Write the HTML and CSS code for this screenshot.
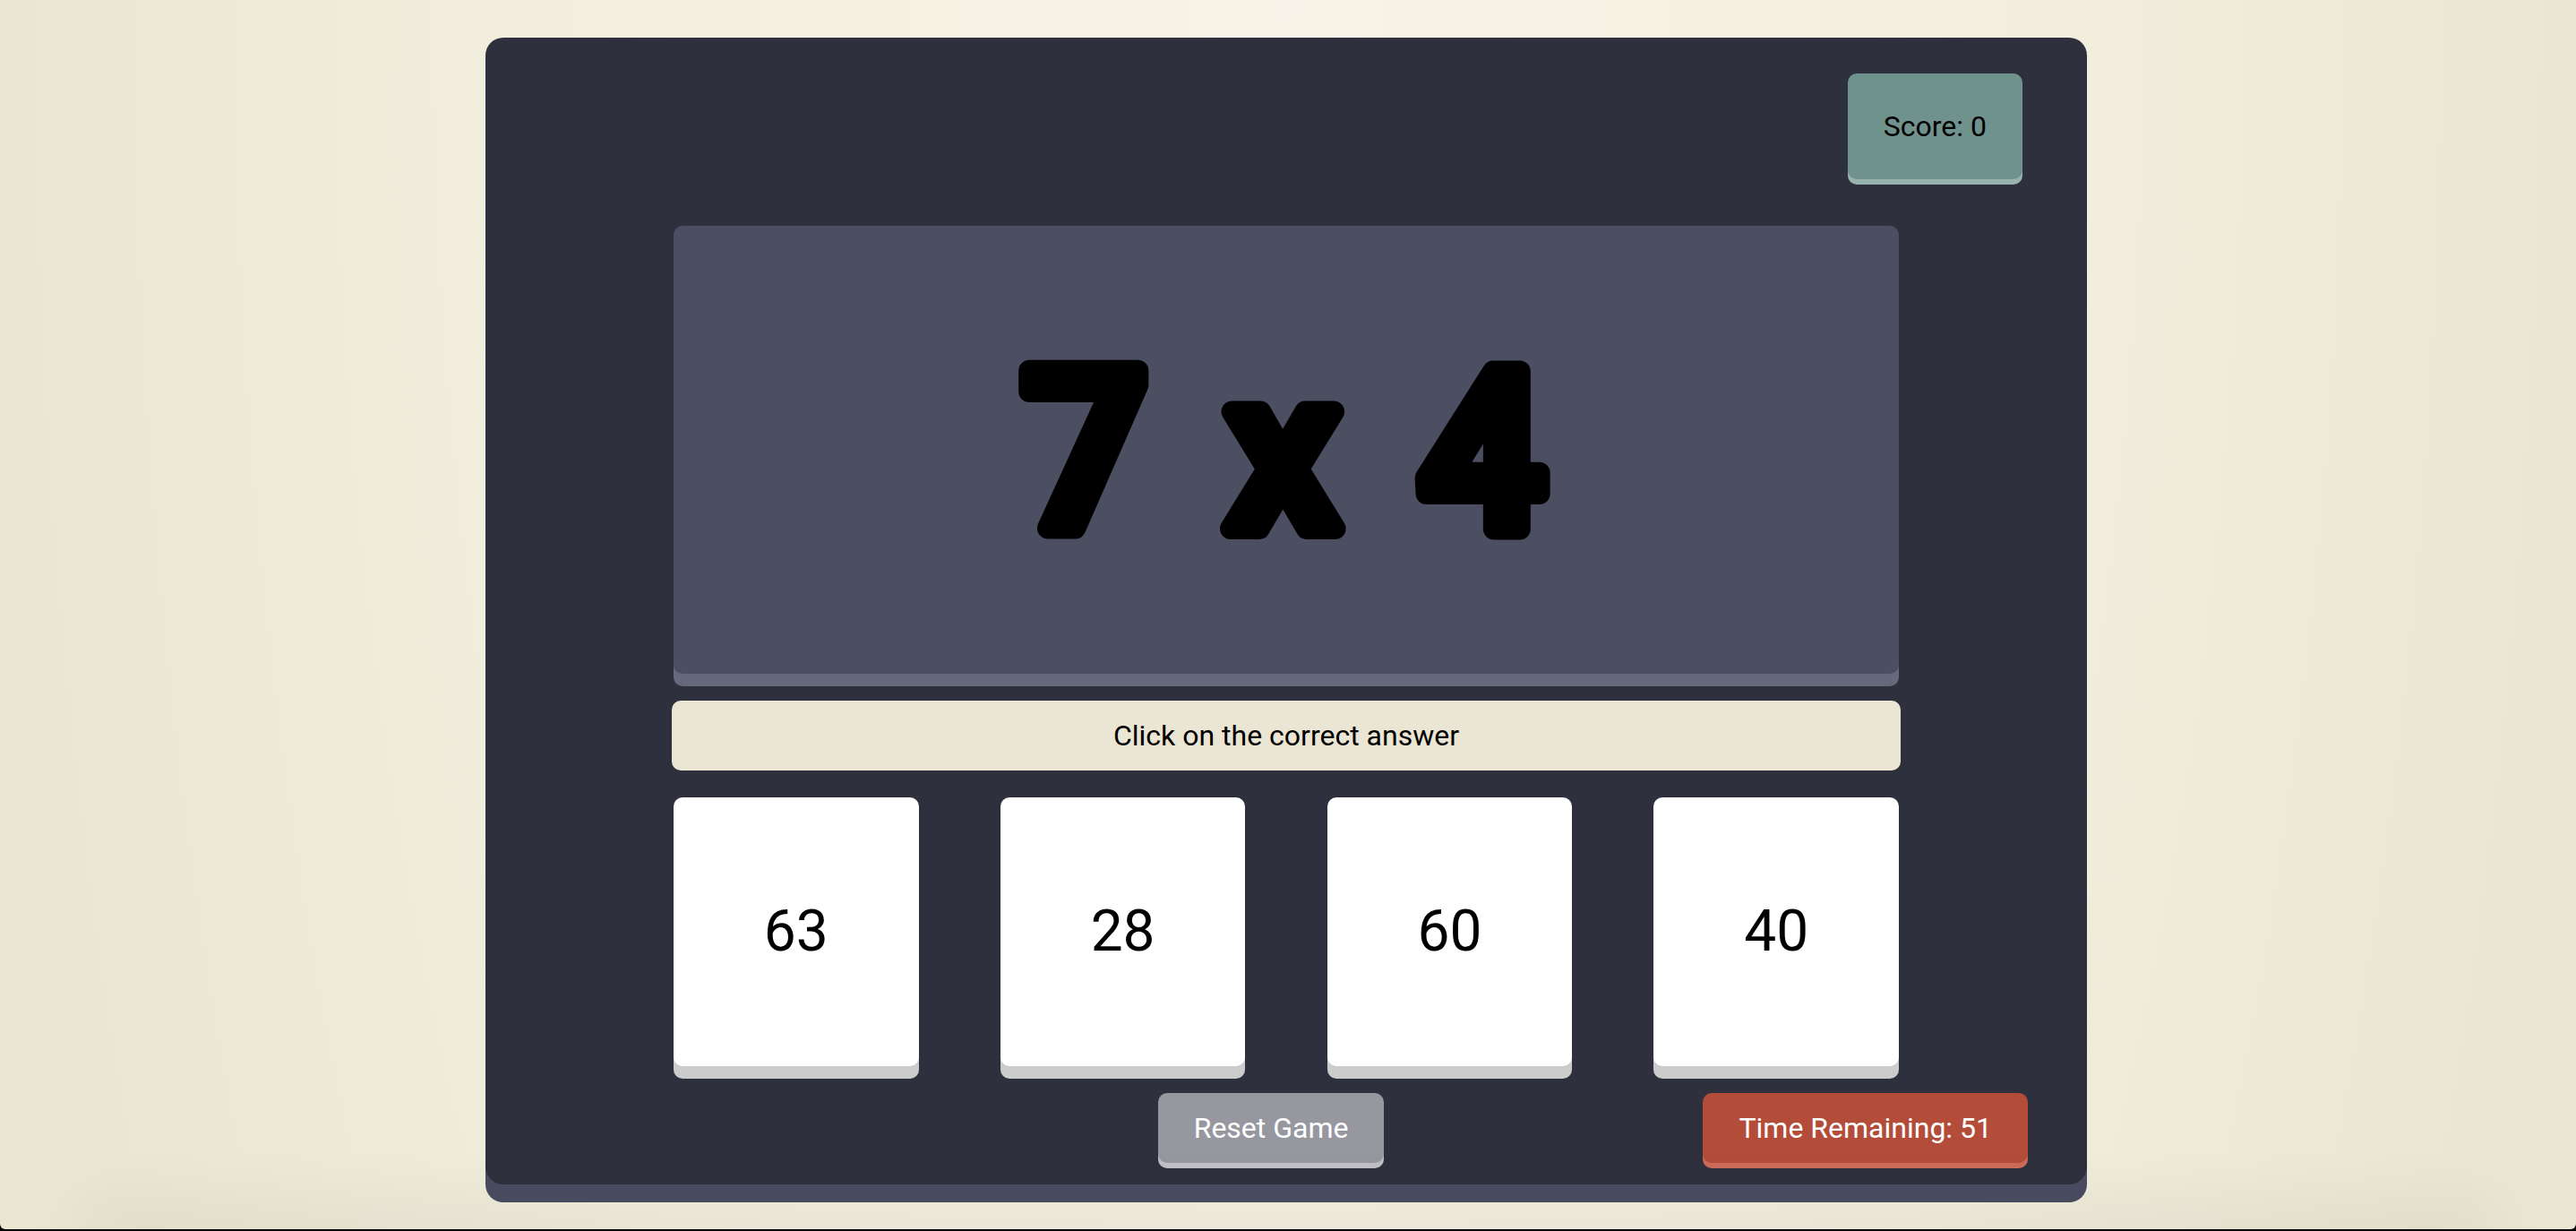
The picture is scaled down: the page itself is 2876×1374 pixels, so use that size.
FILE: index.html
```html
<!DOCTYPE html>
<html lang="en">
<head>
<meta charset="utf-8">
<meta name="viewport" content="width=device-width, initial-scale=1">
<title>Multiplication Game</title>
<link rel="stylesheet" href="styles.css">
</head>
<body>
<main class="page">
  <section class="game">
    <header class="top-bar">
      <p class="score">Score: <span>0</span></p>
    </header>
    <div class="board">
      <h1 class="question">
        <svg class="sum" viewBox="0 0 640 400">
          <text x="95 316 539" y="288">7x4</text>
        </svg>
      </h1>
      <p class="instruction">Click on the correct answer</p>
      <div class="answers">
        <button class="answer" type="button">63</button>
        <button class="answer" type="button">28</button>
        <button class="answer" type="button">60</button>
        <button class="answer" type="button">40</button>
      </div>
    </div>
    <footer class="controls">
      <button class="reset" type="button">Reset Game</button>
      <p class="timer">Time Remaining: <span>51</span></p>
    </footer>
  </section>
</main>
<div class="floor"></div>
</body>
</html>
```
FILE: styles.css
```css
* {
  box-sizing: border-box;
}

html {
  min-height: 100%;
  background: #000;
}

body {
  margin: 0;
  font-family: Roboto, "Liberation Sans", sans-serif;
  font-size: 32px;
  line-height: 38px;
  color: #000;
}

h1,
p {
  margin: 0;
  font-weight: 400;
}

button {
  border: 0;
  font: inherit;
  color: inherit;
  cursor: pointer;
}

.page {
  min-height: calc(100vh - 2px);
  padding: 42px 24px 30px 20px;
  border-radius: 0 0 6px 6px;
  background: radial-gradient(ellipse 50% 250% at 50% 0, #f7f3e8, #f5f1e2 35%, #f1eedd 62%, #e9e6d2);
}

.game {
  max-width: 1788px;
  margin: 0 auto;
  padding: 40px 0 24px;
  border-radius: 20px;
  background: #2e303e;
  box-shadow: 0 20px 0 #4a4d61;
}

.top-bar {
  display: flex;
  justify-content: flex-end;
  padding-right: 72px;
}

.score,
.reset,
.timer,
.question,
.instruction,
.answer {
  border-radius: 10px;
}

.score {
  padding: 40px;
  background: #6f938c;
  box-shadow: 0 6px 0 #98b2ae;
}

.board {
  max-width: 1372px;
  margin: 52px auto 0;
}

.question {
  display: flex;
  align-items: center;
  justify-content: center;
  height: 500px;
  margin: 0 2px;
  background: #4c4e61;
  box-shadow: 0 14px 0 #66687b;
}

.sum {
  width: 640px;
  max-width: 100%;
  overflow: visible;
  font-size: 246px;
  font-weight: 500;
  text-anchor: middle;
  stroke: #000;
  stroke-width: 24px;
  stroke-linejoin: round;
}

.instruction {
  margin-top: 30px;
  padding: 20px;
  background: #ebe5d3;
  text-align: center;
}

.answers {
  display: flex;
  justify-content: space-between;
  margin: 30px 2px 0;
}

.answer {
  width: 20%;
  height: 300px;
  padding: 0;
  background: #fff;
  box-shadow: 0 14px 0 #ccc;
  font-size: 64px;
}

.controls {
  display: flex;
  flex-wrap: wrap;
  justify-content: flex-end;
  gap: 20px 356px;
  margin-top: 30px;
  padding-right: 66px;
  color: #fff;
}

.reset,
.timer {
  padding: 20px 40px;
}

.reset {
  background: #9797a0;
  box-shadow: 0 6px 0 #c0bfc6;
}

.timer {
  background: #b34c39;
  box-shadow: 0 6px 0 #cc6b5a;
}

/* soft shade along the lower edge of the window */
.floor {
  position: fixed;
  right: 100px;
  bottom: 0;
  left: 100px;
  height: 2px;
  background: #000;
  box-shadow: 0 0 80px 10px rgba(0, 0, 0, 0.15);
  pointer-events: none;
}
```
